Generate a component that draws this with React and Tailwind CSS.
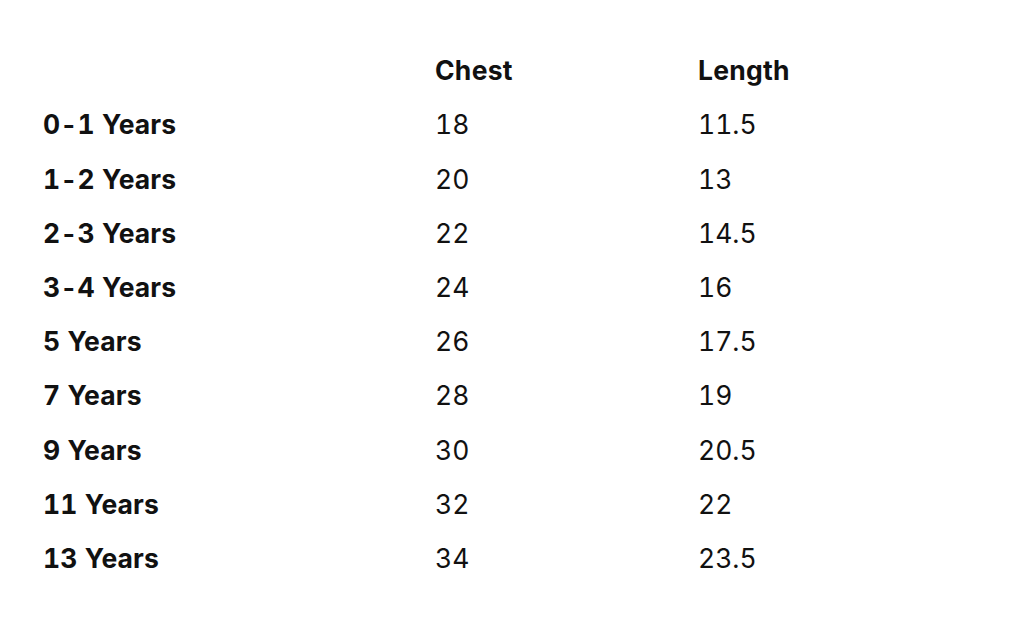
import React from "react";

const rows = [
  ["0-1 Years", "18", "11.5"],
  ["1-2 Years", "20", "13"],
  ["2-3 Years", "22", "14.5"],
  ["3-4 Years", "24", "16"],
  ["5 Years", "26", "17.5"],
  ["7 Years", "28", "19"],
  ["9 Years", "30", "20.5"],
  ["11 Years", "32", "22"],
  ["13 Years", "34", "23.5"],
];

const App = () => {
  return (
    <div
      className="w-[1024px] h-[622px] bg-white text-[#111] pt-[44px] pl-[43px]"
      style={{ fontFamily: "Inter, 'Noto Sans', sans-serif" }}
    >
      <div className="grid grid-cols-[392px_263px_1fr] auto-rows-[54.2px] text-[26.5px] items-center tabular-nums">
        <div />
        <div className="font-bold tracking-[0.01em]">Chest</div>
        <div className="font-bold tracking-[0.01em]">Length</div>
        {rows.map(([age, chest, length]) => (
          <React.Fragment key={age}>
            <div className="font-bold tracking-[0.005em]">{age}</div>
            <div>{chest}</div>
            <div>{length}</div>
          </React.Fragment>
        ))}
      </div>
    </div>
  );
};

export default App;
